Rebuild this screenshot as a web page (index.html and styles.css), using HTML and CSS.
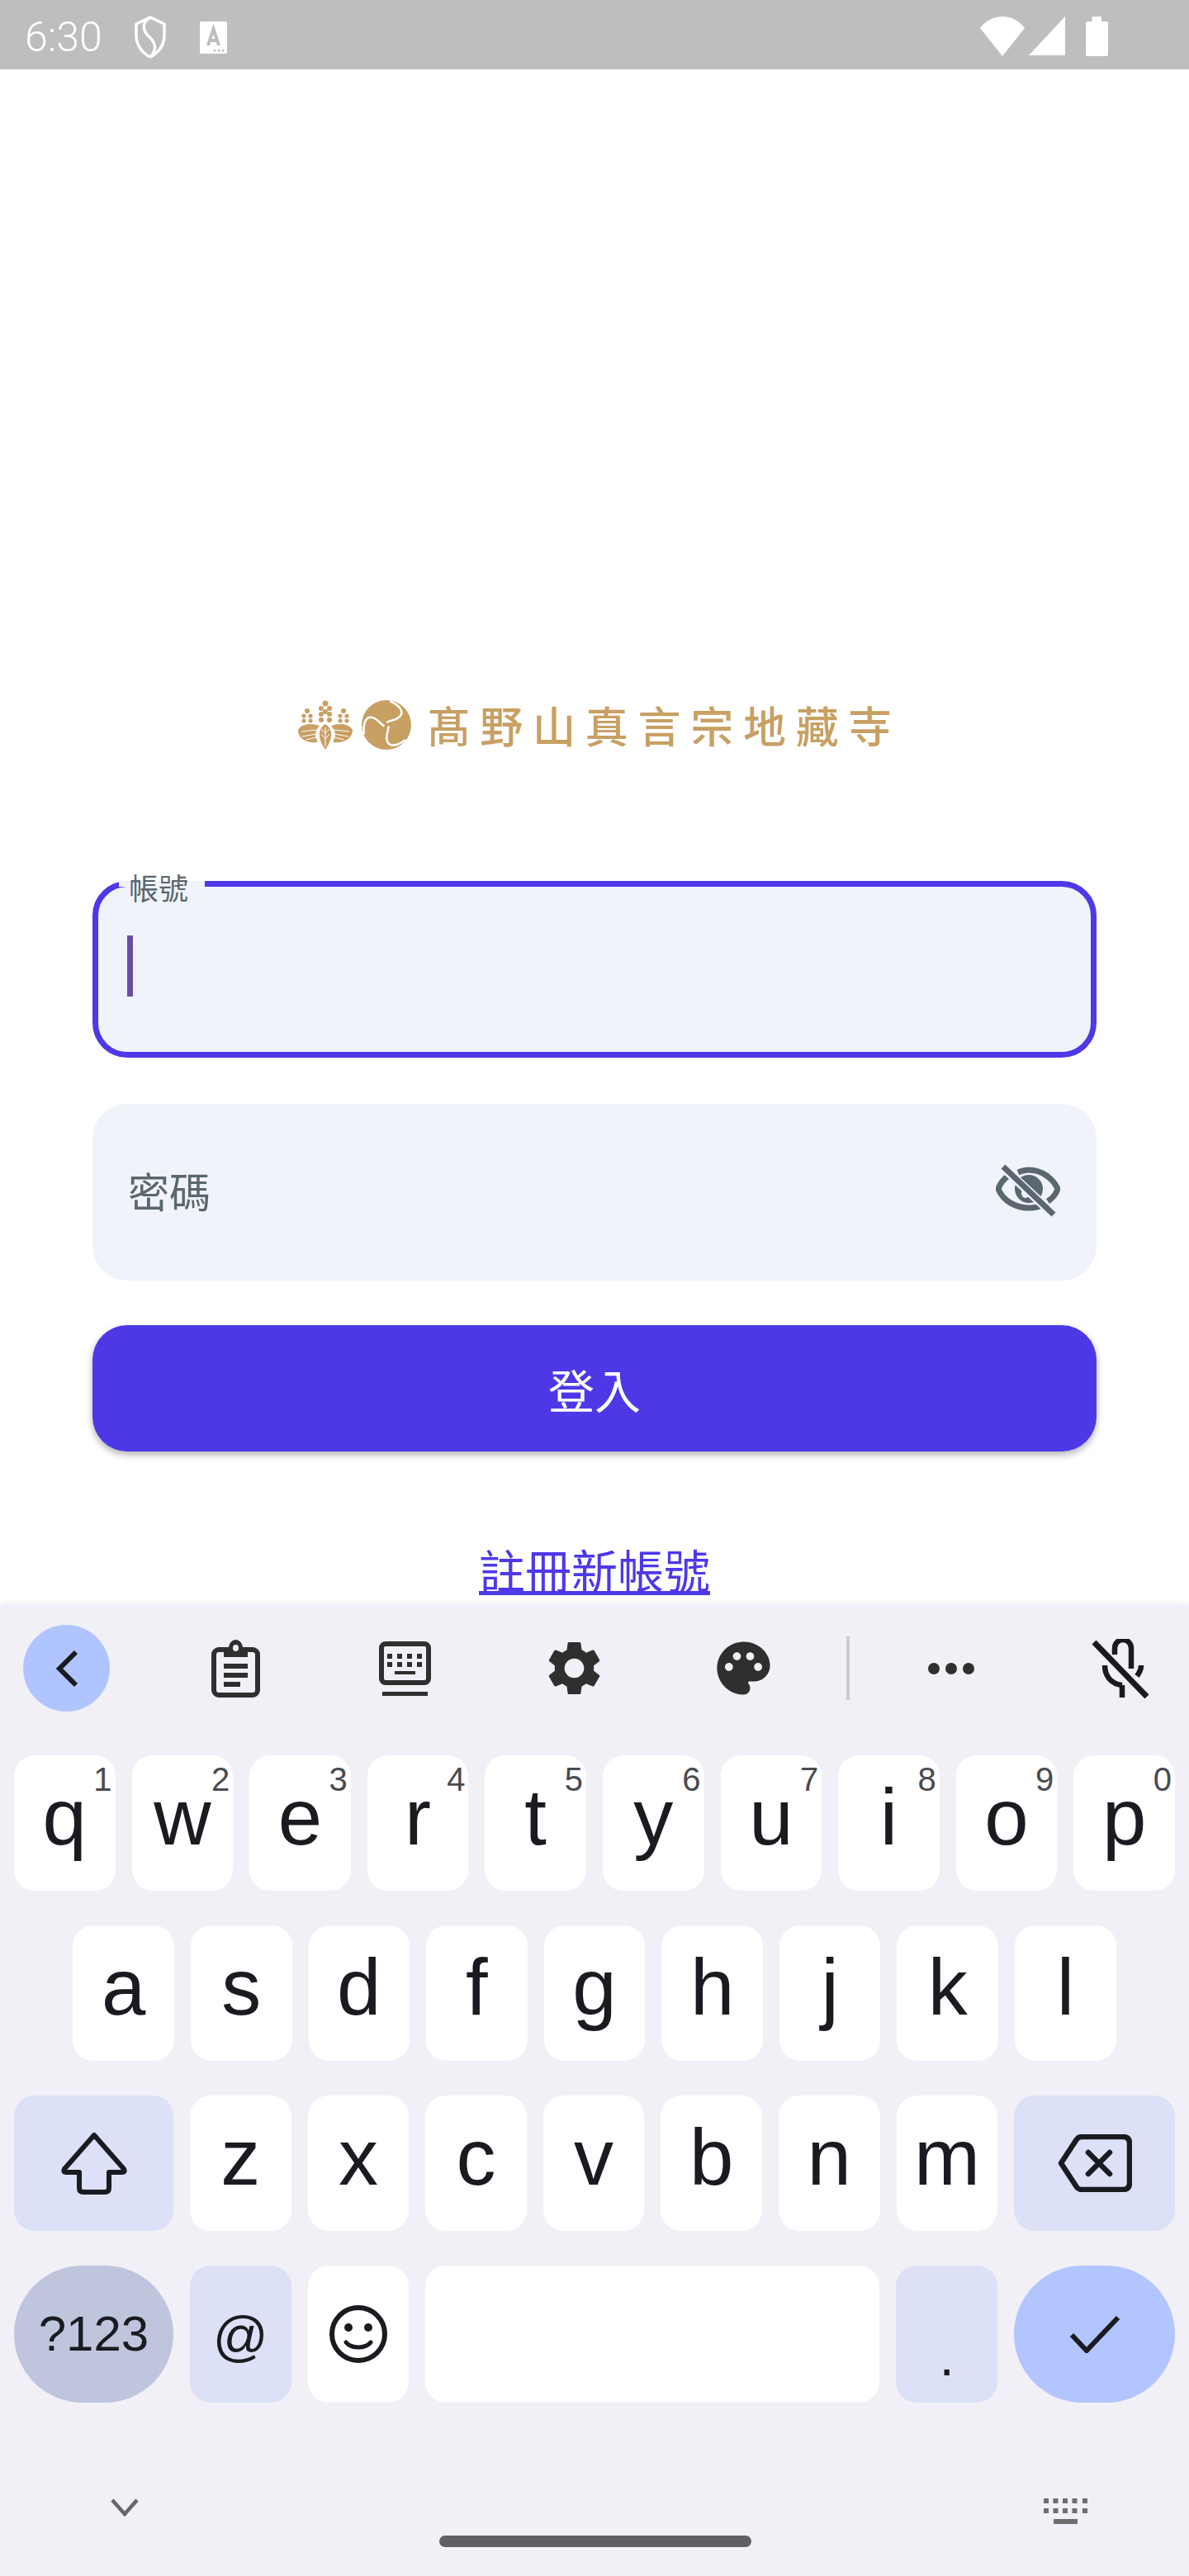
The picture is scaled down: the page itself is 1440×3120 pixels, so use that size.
FILE: index.html
```html
<!DOCTYPE html>
<html lang="zh-Hant">
<head>
    <meta charset="UTF-8">
    <meta name="viewport" content="width=device-width, initial-scale=1.0">
    <title>登入</title>
    <link rel="stylesheet" href="styles.css">
</head>
<body>
    <div class="status-bar">
        <span class="status-time">6:30</span>
        <svg class="status-shield" width="38" height="52" viewBox="0 0 38 52"><path d="M19 2 L36 10 V24 C36 36 28 46 19 50 C10 46 2 36 2 24 V10 Z" fill="none" stroke="#fff" stroke-width="3.5" stroke-linejoin="round"/><path d="M18 3 C8 9 10 19 18 26 C26 33 27 42 19 50" fill="none" stroke="#fff" stroke-width="3.5"/></svg>
        <svg class="status-card" width="33" height="39" viewBox="0 0 33 39"><rect width="33" height="39" rx="2" fill="#fff"/><path d="M10 29 L16.500 9 L23 29 M12.500 23 H20.500" fill="none" stroke="#bebebe" stroke-width="4"/><circle cx="18" cy="35" r="1.500" fill="#bebebe"/><circle cx="23" cy="35" r="1.500" fill="#bebebe"/><circle cx="28" cy="35" r="1.500" fill="#bebebe"/></svg>
        <div class="status-right">
            <svg width="54" height="48" viewBox="0 0 54 48"><path d="M0 14 C7 5 16 0 27 0 C38 0 47 5 54 14 L27 48 Z" fill="#fff"/></svg>
            <svg class="status-signal" width="44" height="47" viewBox="0 0 44 47"><path d="M44 0 V47 H0 Z" fill="#fff"/></svg>
            <svg class="status-battery" width="27" height="48" viewBox="0 0 27 48"><path d="M7.500 0 H19 V6 H25 Q27 6 27 8 V46 Q27 48 25 48 H2 Q0 48 0 46 V8 Q0 6 2 6 H7.500 Z" fill="#fff"/></svg>
        </div>
    </div>

    <div class="login">
        <div class="logo">
            <svg class="logo-kiri" width="66" height="60" viewBox="0 0 66 60">
                <g fill="#c8a064">
                    <circle cx="33" cy="4" r="3.500"/><circle cx="28" cy="10" r="3"/><circle cx="38" cy="10" r="3"/><circle cx="28" cy="17" r="3"/><circle cx="38" cy="17" r="3"/><circle cx="33" cy="14" r="3"/><circle cx="28" cy="24" r="3"/><circle cx="38" cy="24" r="3"/>
                    <circle cx="11" cy="13" r="3"/><circle cx="7" cy="19" r="2.600"/><circle cx="15" cy="19" r="2.600"/><circle cx="7" cy="25" r="2.600"/><circle cx="15" cy="25" r="2.600"/>
                    <circle cx="55" cy="13" r="3"/><circle cx="51" cy="19" r="2.600"/><circle cx="59" cy="19" r="2.600"/><circle cx="51" cy="25" r="2.600"/><circle cx="59" cy="25" r="2.600"/>
                    <path d="M33 29 C41 34 44 44 33 60 C22 44 25 34 33 29 Z"/>
                    <path d="M26 31 C14 27 4 29 0 36 C0 46 10 53 24 51 C20 44 20 37 26 31 Z"/>
                    <path d="M40 31 C52 27 62 29 66 36 C66 46 56 53 42 51 C46 44 46 37 40 31 Z"/>
                </g>
                <g fill="none" stroke="#fff" stroke-width="1">
                    <path d="M33 33 V56 M33 40 L28 35 M33 40 L38 35 M33 47 L28 41 M33 47 L38 41"/>
                    <path d="M23 36 L4 38 M22 41 L5 44 M22 45 L10 48"/>
                    <path d="M43 36 L62 38 M44 41 L61 44 M44 45 L56 48"/>
                </g>
            </svg>
            <svg class="logo-tomoe" width="60" height="60" viewBox="0 0 60 60">
                <circle cx="30" cy="30" r="30" fill="#c8a064"/>
                <g fill="none" stroke="#fff" stroke-width="2.500">
                    <path d="M34 1 C46 6 52 14 46 20 C42 24 36 24 30 27"/>
                    <path d="M34 1 C46 6 52 14 46 20 C42 24 36 24 30 27" transform="rotate(120 30 30)"/>
                    <path d="M34 1 C46 6 52 14 46 20 C42 24 36 24 30 27" transform="rotate(240 30 30)"/>
                </g>
            </svg>
            <span class="logo-text">髙野山真言宗地藏寺</span>
        </div>

        <div class="field field-active">
            <span class="field-notch"></span>
            <span class="field-label">帳號</span>
            <span class="field-cursor"></span>
        </div>

        <div class="field field-password">
            <span class="field-hint">密碼</span>
            <svg width="78" height="66" viewBox="0 0 78 66">
                <path d="M17 15 C9 20 5 26 3 32 C9 47 25 55 40 55 C46 55 52 54 57 51" fill="none" stroke="#5a6670" stroke-width="7"/>
                <path d="M27 12 C32 10 36 9 40 9 C56 9 70 20 75 32 C73 38 69 43 63 47" fill="none" stroke="#5a6670" stroke-width="7"/>
                <circle cx="40" cy="32" r="17" fill="#5a6670"/>
                <ellipse cx="36" cy="37" rx="5" ry="6" fill="#f0f3f9"/>
                <path d="M9 6 L70 63" stroke="#f0f3f9" stroke-width="11"/>
                <path d="M9 5 L70 63" stroke="#5a6670" stroke-width="7"/>
            </svg>
        </div>

        <div class="login-btn">登入</div>
        <a class="register-link" href="#">註冊新帳號</a>
    </div>

    <div class="keyboard">
        <div class="toolbar">
            <div class="tb-back">
                <svg width="30" height="46" viewBox="0 0 30 46"><path d="M26 3 L6 23 L26 43" fill="none" stroke="#1a1b20" stroke-width="6"/></svg>
            </div>
            <div class="tb-cell">
                <svg width="59" height="70" viewBox="0 0 59 70">
                    <rect x="3" y="12" width="53" height="55" rx="6" fill="none" stroke="#2f2f2f" stroke-width="6"/>
                    <path d="M15 9 H21 C22 3 26 0 29.500 0 C33 0 37 3 38 9 H44 V21 H15 Z" fill="#2f2f2f"/>
                    <ellipse cx="29.500" cy="10" rx="3.500" ry="4" fill="#f0f0f6"/>
                    <rect x="15" y="29" width="29" height="6" fill="#2f2f2f"/>
                    <rect x="15" y="40" width="29" height="6" fill="#2f2f2f"/>
                    <rect x="15" y="51" width="20" height="6" fill="#2f2f2f"/>
                </svg>
            </div>
            <div class="tb-cell">
                <svg width="63" height="66" viewBox="0 0 63 66">
                    <rect x="3" y="3" width="57" height="47" rx="5" fill="none" stroke="#2f2f2f" stroke-width="6"/>
                    <g fill="#2f2f2f">
                        <rect x="10" y="15" width="6" height="6"/><rect x="22" y="15" width="6" height="6"/><rect x="34" y="15" width="6" height="6"/><rect x="46" y="15" width="6" height="6"/>
                        <rect x="10" y="25" width="6" height="6"/><rect x="22" y="25" width="6" height="6"/><rect x="34" y="25" width="6" height="6"/><rect x="46" y="25" width="6" height="6"/>
                        <rect x="19" y="36" width="25" height="4"/>
                        <rect x="4" y="61" width="55" height="5"/>
                    </g>
                </svg>
            </div>
            <div class="tb-cell">
                <svg width="79" height="79" viewBox="0 0 24 24"><path fill="#2f2f2f" d="M19.14 12.94c.04-.3.06-.61.06-.94 0-.32-.02-.64-.07-.94l2.03-1.58c.18-.14.23-.41.12-.61l-1.92-3.32c-.12-.22-.37-.29-.59-.22l-2.39.96c-.5-.38-1.03-.7-1.62-.94l-.36-2.54c-.04-.24-.24-.41-.48-.41h-3.84c-.24 0-.43.17-.47.41l-.36 2.54c-.59.24-1.13.57-1.62.94l-2.39-.96c-.22-.08-.47 0-.59.22L2.74 8.87c-.12.21-.08.47.12.61l2.03 1.58c-.05.3-.09.63-.09.94s.02.64.07.94l-2.03 1.58c-.18.14-.23.41-.12.61l1.92 3.32c.12.22.37.29.59.22l2.39-.96c.5.38 1.03.7 1.62.94l.36 2.54c.05.24.24.41.48.41h3.84c.24 0 .44-.17.47-.41l.36-2.54c.59-.24 1.13-.56 1.62-.94l2.39.96c.22.08.47 0 .59-.22l1.92-3.32c.12-.22.07-.47-.12-.61l-2.01-1.58zM12 15.6c-1.98 0-3.6-1.62-3.6-3.6s1.62-3.6 3.6-3.6 3.6 1.62 3.6 3.6-1.62 3.6-3.6 3.6z"/></svg>
            </div>
            <div class="tb-cell">
                <svg width="77" height="77" viewBox="0 0 24 24"><path fill="#2f2f2f" d="M12 2C6.490 2 2 6.490 2 12s4.490 10 10 10c1.380 0 2.500-1.120 2.500-2.500 0-.61-.23-1.200-.64-1.670-.08-.1-.13-.21-.13-.33 0-.28.22-.5.5-.5H16c3.310 0 6-2.690 6-6 0-4.960-4.490-9-10-9zm-5.500 11c-.83 0-1.500-.67-1.500-1.500S5.670 10 6.500 10s1.500.67 1.500 1.500S7.330 13 6.500 13zm3-4C8.670 9 8 8.330 8 7.500S8.670 6 9.500 6s1.500.67 1.500 1.500S10.330 9 9.500 9zm5 0c-.83 0-1.500-.67-1.500-1.500S13.670 6 14.500 6s1.500.67 1.500 1.500S15.330 9 14.500 9zm3 4c-.83 0-1.500-.67-1.500-1.500s.67-1.500 1.500-1.500 1.500.67 1.500 1.500-.67 1.500-1.500 1.500z"/></svg>
            </div>
            <div class="tb-divider"></div>
            <div class="tb-cell tb-dots">
                <svg width="56" height="14" viewBox="0 0 56 14"><circle cx="7" cy="7" r="7" fill="#2f2f2f"/><circle cx="28" cy="7" r="7" fill="#2f2f2f"/><circle cx="49" cy="7" r="7" fill="#2f2f2f"/></svg>
            </div>
            <div class="tb-cell">
                <svg width="72" height="72" viewBox="0 0 72 72" fill="none" stroke="#1a1b20" stroke-width="6.500">
                    <path d="M29 19 V11 A10 10 0 0 1 49 11 V36"/>
                    <path d="M17 32 C17 46 26 55 38 56 M38 56 V71"/>
                    <path d="M61 32 C61 37 59 41 56 45"/>
                    <path d="M4 4 L68 70" stroke-width="7"/>
                </svg>
            </div>
        </div>

        <div class="kb-rows">
            <div class="kb-row">
                <div class="key">q<span class="key-num">1</span></div>
                <div class="key">w<span class="key-num">2</span></div>
                <div class="key">e<span class="key-num">3</span></div>
                <div class="key">r<span class="key-num">4</span></div>
                <div class="key">t<span class="key-num">5</span></div>
                <div class="key">y<span class="key-num">6</span></div>
                <div class="key">u<span class="key-num">7</span></div>
                <div class="key">i<span class="key-num">8</span></div>
                <div class="key">o<span class="key-num">9</span></div>
                <div class="key">p<span class="key-num">0</span></div>
            </div>
            <div class="kb-row kb-row-center">
                <div class="key">a</div>
                <div class="key">s</div>
                <div class="key">d</div>
                <div class="key">f</div>
                <div class="key">g</div>
                <div class="key">h</div>
                <div class="key">j</div>
                <div class="key">k</div>
                <div class="key">l</div>
            </div>
            <div class="kb-row">
                <div class="key key-wide key-fn key-icon">
                    <svg width="80" height="76" viewBox="0 0 80 76"><path d="M40 4 L76 45 Q78 49 74 49 H58 V68 Q58 73 53 73 H27 Q22 73 22 68 V49 H6 Q2 49 4 45 Z" fill="none" stroke="#1a1b20" stroke-width="6" stroke-linejoin="round"/></svg>
                </div>
                <div class="key">z</div>
                <div class="key">x</div>
                <div class="key">c</div>
                <div class="key">v</div>
                <div class="key">b</div>
                <div class="key">n</div>
                <div class="key">m</div>
                <div class="key key-back key-fn key-icon">
                    <svg width="90" height="70" viewBox="0 0 90 70" fill="none" stroke="#1a1b20" stroke-width="6.500" stroke-linecap="round" stroke-linejoin="round"><path d="M4 35 L23 6 Q25 3 29 3 H79 Q87 3 87 11 V59 Q87 67 79 67 H29 Q25 67 23 64 Z"/><path d="M37 22 L63 48 M63 22 L37 48"/></svg>
                </div>
            </div>
            <div class="kb-row kb-row-last">
                <div class="key key-wide key-sym key-text-center">?123</div>
                <div class="key key-fn key-at key-text-center">@</div>
                <div class="key key-icon">
                    <svg width="70" height="70" viewBox="0 0 70 70"><circle cx="35" cy="35" r="32" fill="none" stroke="#1a1b20" stroke-width="6"/><circle cx="23" cy="27" r="5" fill="#1a1b20"/><circle cx="47" cy="27" r="5" fill="#1a1b20"/><path d="M20 45 C27 53 43 53 50 45" fill="none" stroke="#1a1b20" stroke-width="5" stroke-linecap="round"/></svg>
                </div>
                <div class="key key-space"></div>
                <div class="key key-fn key-dot">.</div>
                <div class="key key-back key-enter key-icon">
                    <svg width="62" height="46" viewBox="0 0 62 46"><path d="M3 24 L21 43 L59 3" fill="none" stroke="#1a1b20" stroke-width="6"/></svg>
                </div>
            </div>
        </div>

        <div class="kb-bottom">
            <svg width="34" height="22" viewBox="0 0 34 22"><path d="M2 2 L17 19 L32 2" fill="none" stroke="#666" stroke-width="4.500"/></svg>
            <div class="home-handle"></div>
            <svg width="53" height="31" viewBox="0 0 53 31" fill="#6e6e6e">
                <rect x="0" y="0" width="6" height="6"/><rect x="11.500" y="0" width="6" height="6"/><rect x="23" y="0" width="6" height="6"/><rect x="34.500" y="0" width="6" height="6"/><rect x="47" y="0" width="6" height="6"/>
                <rect x="0" y="12" width="6" height="6"/><rect x="11.500" y="12" width="6" height="6"/><rect x="23" y="12" width="6" height="6"/><rect x="34.500" y="12" width="6" height="6"/><rect x="47" y="12" width="6" height="6"/>
                <rect x="12" y="25" width="29" height="6"/>
            </svg>
        </div>
    </div>
</body>
</html>
```

FILE: styles.css
```css
body {
    margin: 0;
    width: 1440px;
    height: 3120px;
    overflow: hidden;
    background: #fff;
    font-family: "Noto Sans CJK TC", "Noto Sans", sans-serif;
}

/* status bar */
.status-bar {
    height: 84px;
    background: #bebebe;
    display: flex;
    align-items: flex-start;
    color: #fff;
}
.status-time {
    margin: 17px 0 0 30px;
    font-family: Roboto, sans-serif;
    font-weight: 300;
    font-size: 50px;
    line-height: 56px;
    width: 92px;
    white-space: nowrap;
}
.status-shield {
    margin: 19px 0 0 41px;
}
.status-card {
    margin: 26px 0 0 41px;
}
.status-right {
    margin-left: auto;
    margin-right: 98px;
    padding-top: 20px;
    display: flex;
}
.status-signal {
    margin-left: 5px;
}
.status-battery {
    margin-left: 25px;
}

/* login form */
.login {
    height: 1860px;
    padding: 761px 112px 0;
    box-sizing: border-box;
    overflow: hidden;
}
.logo {
    height: 66px;
    display: flex;
    align-items: center;
    justify-content: center;
    color: #c8a064;
}
.logo-tomoe {
    margin-left: 11px;
}
.logo-text {
    margin-left: 20px;
    margin-right: -12px;
    font-size: 52px;
    font-weight: 500;
    letter-spacing: 11.750px;
    line-height: 66px;
}
.field {
    margin-top: 56px;
    height: 214px;
    box-sizing: border-box;
    background: #f0f3f9;
    border-radius: 42px;
    position: relative;
}
.field-active {
    margin-top: 156px;
    border: 7px solid #4d38ea;
}
.field-notch {
    position: absolute;
    left: 25px;
    top: -7px;
    width: 104px;
    height: 7px;
    background: #f0f3f9;
}
.field-label {
    position: absolute;
    left: 37px;
    top: -22px;
    font-size: 36px;
    line-height: 44px;
    color: #5a6670;
}
.field-cursor {
    position: absolute;
    left: 35px;
    top: 59px;
    width: 7px;
    height: 74px;
    background: #6a4fa0;
}
.field-password {
    display: flex;
    align-items: center;
    justify-content: space-between;
    padding: 0 44px 6px 43px;
}
.field-hint {
    font-size: 50px;
    color: #5a6670;
}
.login-btn {
    margin-top: 54px;
    height: 153px;
    border-radius: 42px;
    background: #4d38e8;
    color: #fff;
    font-size: 56px;
    display: flex;
    align-items: center;
    justify-content: center;
    box-shadow: 0 4px 8px rgba(0, 0, 0, 0.3);
}
.register-link {
    display: block;
    margin-top: 107px;
    text-align: center;
    font-size: 56px;
    line-height: 70px;
    color: #4d38ea;
}

/* keyboard */
.keyboard {
    height: 1176px;
    background: #f0f0f6;
    box-shadow: 0 -2px 8px rgba(0, 0, 0, 0.08);
    position: relative;
    overflow: hidden;
    font-family: "Liberation Sans", Arial, sans-serif;
    color: #1a1b20;
}
.toolbar {
    display: flex;
    align-items: center;
    height: 105px;
    padding: 24px 0 0 28px;
}
.tb-back {
    flex: 0 0 105px;
    height: 105px;
    border-radius: 50%;
    background: #b0c4ff;
    display: flex;
    align-items: center;
    justify-content: center;
    margin-right: 50px;
}
.tb-cell {
    flex: 0 0 205px;
    display: flex;
    align-items: center;
    justify-content: center;
}
.tb-divider {
    flex: 0 0 4px;
    height: 77px;
    margin: 0 20px 0 22px;
    background: #cbcbd1;
}
.kb-rows {
    margin-top: 53px;
    padding: 0 17px;
    display: flex;
    flex-direction: column;
    gap: 42px;
}
.kb-row {
    display: flex;
    gap: 20px;
    height: 164px;
}
.kb-row-center {
    justify-content: center;
}
.kb-row-last {
    height: 166px;
}
.key {
    flex: 0 0 122.600px;
    box-sizing: border-box;
    background: #fff;
    border-radius: 25px;
    position: relative;
    text-align: center;
    font-size: 96px;
    line-height: 96px;
    padding-top: 27px;
}
.key-num {
    position: absolute;
    top: 9px;
    right: 4px;
    font-size: 40px;
    line-height: 40px;
    color: #4a4a50;
}
.key-wide {
    flex-basis: 193px;
}
.key-back {
    flex-basis: 195px;
}
.key-fn {
    background: #dde1f7;
}
.key-icon {
    padding-top: 0;
    display: flex;
    align-items: center;
    justify-content: center;
}
.key-text-center {
    padding-top: 0;
    display: flex;
    align-items: center;
    justify-content: center;
    font-size: 60px;
}
.key-sym {
    background: #bfc5dd;
    border-radius: 83px;
}
.key-at {
    font-size: 66px;
    padding-top: 4px;
}
.key-space {
    flex: 1;
}
.key-dot {
    font-size: 66px;
    padding-top: 62px;
}
.key-enter {
    background: #b3c5fe;
    border-radius: 83px;
}
.kb-bottom {
    display: grid;
    grid-template-columns: 302px 1fr 300px;
    justify-items: center;
    align-items: start;
    padding-top: 110px;
}
.kb-bottom svg {
    margin-top: 6px;
}
.home-handle {
    width: 378px;
    height: 14px;
    margin-top: 51px;
    border-radius: 7px;
    background: #606064;
}
```
